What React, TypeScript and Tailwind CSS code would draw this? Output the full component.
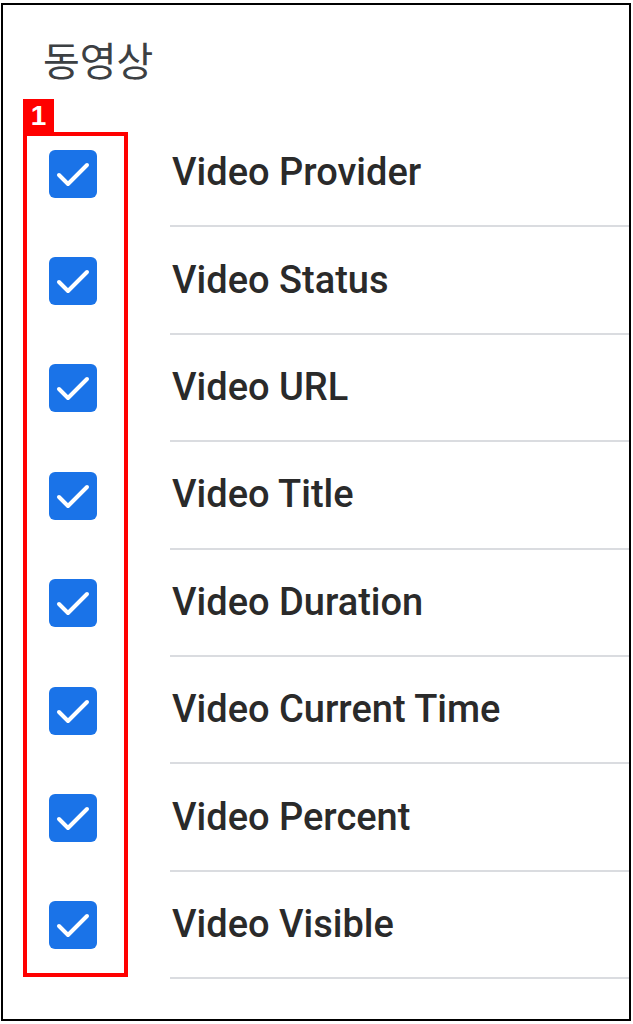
import React from "react";

const items = [
  "Video Provider",
  "Video Status",
  "Video URL",
  "Video Title",
  "Video Duration",
  "Video Current Time",
  "Video Percent",
  "Video Visible",
];

function CheckBox() {
  return (
    <div className="w-12 h-12 rounded-[6px] bg-[#1a73e8] flex items-center justify-center shrink-0">
      <svg width="48" height="48" viewBox="0 0 48 48" fill="none">
        <path
          d="M10 25L19 34L38 15"
          stroke="white"
          strokeWidth="4"
          strokeLinecap="round"
          strokeLinejoin="round"
        />
      </svg>
    </div>
  );
}

export default function App() {
  return (
    <div className="w-[633px] h-[1024px] bg-white pt-[3px] pl-[1px]">
      <div className="relative w-[630px] h-[1018px] border-2 border-black bg-white">
        {/* title */}
        <div
          className="pl-[40px] pt-[28px] h-[115px] text-[40px] leading-[52px] text-[#3c4043]"
          style={{ fontFamily: '"Noto Sans CJK KR", sans-serif' }}
        >
          동영상
        </div>

        {/* rows */}
        <div style={{ fontFamily: "Roboto, sans-serif" }}>
          {items.map((label) => (
            <div key={label} className="flex h-[107.4px] items-stretch">
              <div className="w-[167px] pl-[46px] flex items-center">
                <CheckBox />
              </div>
              <div className="flex-1 flex items-center pl-[2px] border-b-2 border-[#dadce0] text-[38px] font-medium text-[#2a2a2a]">
                {label}
              </div>
            </div>
          ))}
        </div>

        {/* annotation overlay */}
        <div className="absolute left-[20px] top-[94px] w-[31px] h-[34px] bg-[#ff0000] flex items-center justify-center text-white text-[28px] font-bold leading-none"
          style={{ fontFamily: '"Liberation Sans", Arial, sans-serif' }}>
          1
        </div>
        <div className="absolute left-[20px] top-[127px] w-[105px] h-[845px] border-4 border-[#ff0000]" />
      </div>
    </div>
  );
}
